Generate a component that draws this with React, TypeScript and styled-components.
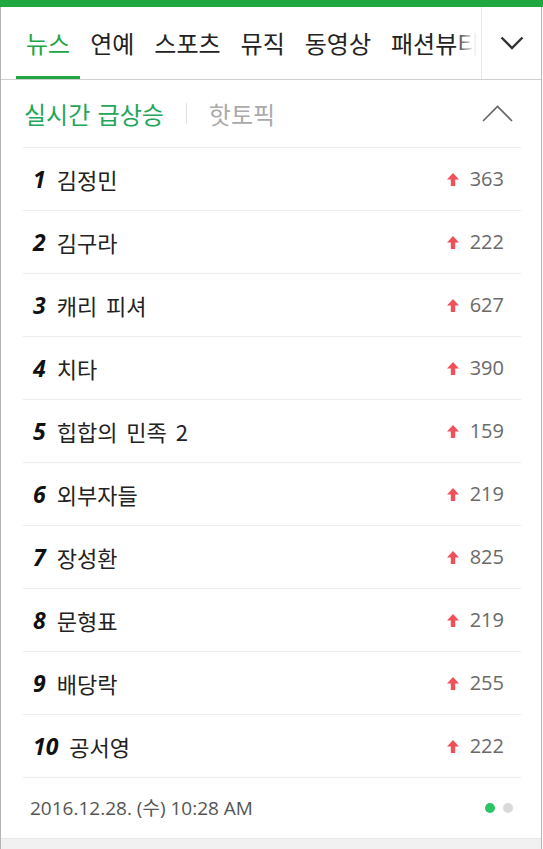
import styled, { createGlobalStyle } from 'styled-components';

const GlobalStyle = createGlobalStyle`
  html, body {
    margin: 0;
    padding: 0;
    background: #fff;
  }
  body {
    font-family: "Noto Sans CJK KR", "Noto Sans", sans-serif;
    -webkit-font-smoothing: antialiased;
  }
`;

const Page = styled.div`
  width: 543px;
  height: 849px;
  box-sizing: border-box;
  border-top: 7px solid #1fa83f;
  display: flex;
  flex-direction: column;
  overflow: hidden;
`;

const Frame = styled.div`
  flex: 1;
  display: flex;
  flex-direction: column;
  margin-right: 1px;
  border-left: 1px solid #b4b4b4;
  border-right: 1px solid #b4b4b4;
`;

const TabBar = styled.nav`
  display: flex;
  height: 72px;
  border-bottom: 1px solid #cfcfcf;
`;

const TabScroller = styled.div`
  flex: 1;
  position: relative;
  display: flex;
  padding-left: 15px;
  overflow: hidden;

  &::after {
    content: '';
    position: absolute;
    top: 0;
    right: 0;
    bottom: 0;
    width: 26px;
    background: linear-gradient(90deg, rgba(255, 255, 255, 0) 0%, rgba(255, 255, 255, 0.92) 70%, #fff 100%);
  }
`;

const Tab = styled.a<{ $active?: boolean }>`
  position: relative;
  flex-shrink: 0;
  display: flex;
  align-items: center;
  padding: 0 10px;
  font-size: 24px;
  line-height: 1;
  white-space: nowrap;
  color: ${(p) => (p.$active ? '#22a544' : '#222')};
  cursor: pointer;

  &::after {
    content: '';
    display: ${(p) => (p.$active ? 'block' : 'none')};
    position: absolute;
    left: 0;
    right: 0;
    bottom: 0;
    height: 3px;
    background: #22a544;
  }
`;

const MenuButton = styled.button`
  width: 60px;
  flex-shrink: 0;
  display: flex;
  align-items: center;
  justify-content: center;
  padding: 0;
  border: none;
  border-left: 1px solid #e6e6e6;
  background: #fff;
  cursor: pointer;
`;

const Section = styled.section`
  margin: 0 20px 0 22px;
  display: flex;
  flex-direction: column;
`;

const SectionHead = styled.div`
  height: 67px;
  display: flex;
  align-items: center;
  padding: 0 8px 0 1px;
`;

const HeadTab = styled.span<{ $active?: boolean }>`
  font-size: 24px;
  line-height: 1;
  word-spacing: 2px;
  color: ${(p) => (p.$active ? '#24a65a' : '#aaaaaa')};
  cursor: pointer;
`;

const HeadDivider = styled.span`
  width: 1px;
  height: 21px;
  margin: 0 22px;
  background: #e2e2e2;
`;

const CollapseButton = styled.span`
  margin-left: auto;
  display: flex;
  cursor: pointer;
`;

const RankList = styled.ol`
  margin: 0;
  padding: 0;
  list-style: none;
  border-top: 1px solid #ececec;
`;

const Row = styled.li`
  height: 62px;
  display: flex;
  align-items: center;
  padding: 0 17px 0 10px;
  border-bottom: 1px solid #ececec;
`;

const Rank = styled.span`
  margin-right: 11px;
  font-family: "Open Sans", "Liberation Sans", sans-serif;
  font-size: 23px;
  font-weight: 700;
  font-style: italic;
  line-height: 1;
  color: #111;
`;

const Keyword = styled.span`
  font-size: 22px;
  line-height: 1;
  word-spacing: 4px;
  color: #222;
`;

const Change = styled.span`
  margin-left: auto;
  display: flex;
  align-items: center;
  gap: 11px;
`;

const Count = styled.span`
  font-family: "Open Sans", "Liberation Sans", sans-serif;
  font-size: 20px;
  line-height: 1;
  color: #6a6a6a;
`;

const Footer = styled.div`
  height: 60px;
  display: flex;
  align-items: center;
  padding: 0 8px 0 7px;
`;

const Stamp = styled.span`
  font-family: "Open Sans", "Noto Sans CJK KR", sans-serif;
  font-size: 19px;
  line-height: 1;
  color: #555;
`;

const Dots = styled.span`
  margin-left: auto;
  display: flex;
  gap: 8px;
`;

const Dot = styled.i<{ $on?: boolean }>`
  width: 10px;
  height: 10px;
  border-radius: 50%;
  background: ${(p) => (p.$on ? '#2cc566' : '#d9d9d9')};
`;

const BottomStrip = styled.div`
  margin-top: auto;
  height: 10px;
  background: #f1f1f1;
  border-top: 1px solid #e6e6e6;
`;

const tabs = ['뉴스', '연예', '스포츠', '뮤직', '동영상', '패션뷰티'];

const items = [
  { name: '김정민', count: 363 },
  { name: '김구라', count: 222 },
  { name: '캐리 피셔', count: 627 },
  { name: '치타', count: 390 },
  { name: '힙합의 민족 2', count: 159 },
  { name: '외부자들', count: 219 },
  { name: '장성환', count: 825 },
  { name: '문형표', count: 219 },
  { name: '배당락', count: 255 },
  { name: '공서영', count: 222 },
];

const UpArrow = () => (
  <svg width="12" height="13" viewBox="0 0 12 13">
    <path d="M6 0 L12 6.5 L8.2 6.5 L8.2 13 L3.8 13 L3.8 6.5 L0 6.5 Z" fill="#f0505a" />
  </svg>
);

const App = () => {
  return (
    <Page>
      <GlobalStyle />
      <Frame>
        <TabBar>
          <TabScroller>
            {tabs.map((t, i) => (
              <Tab key={t} $active={i === 0}>
                {t}
              </Tab>
            ))}
          </TabScroller>
          <MenuButton aria-label="메뉴 펼치기">
            <svg width="24" height="14" viewBox="0 0 24 14">
              <path d="M1.5 1.5 L12 12 L22.5 1.5" fill="none" stroke="#333" strokeWidth="2.4" />
            </svg>
          </MenuButton>
        </TabBar>

        <Section>
          <SectionHead>
            <HeadTab $active>실시간 급상승</HeadTab>
            <HeadDivider />
            <HeadTab>핫토픽</HeadTab>
            <CollapseButton>
              <svg width="31" height="17" viewBox="0 0 31 17">
                <path d="M1 16 L15.5 1.5 L30 16" fill="none" stroke="#666" strokeWidth="1.6" />
              </svg>
            </CollapseButton>
          </SectionHead>

          <RankList>
            {items.map((item, i) => (
              <Row key={item.name}>
                <Rank>{i + 1}</Rank>
                <Keyword>{item.name}</Keyword>
                <Change>
                  <UpArrow />
                  <Count>{item.count}</Count>
                </Change>
              </Row>
            ))}
          </RankList>

          <Footer>
            <Stamp>2016.12.28. (수) 10:28 AM</Stamp>
            <Dots>
              <Dot $on />
              <Dot />
            </Dots>
          </Footer>
        </Section>
        <BottomStrip />
      </Frame>
    </Page>
  );
};

export default App;
